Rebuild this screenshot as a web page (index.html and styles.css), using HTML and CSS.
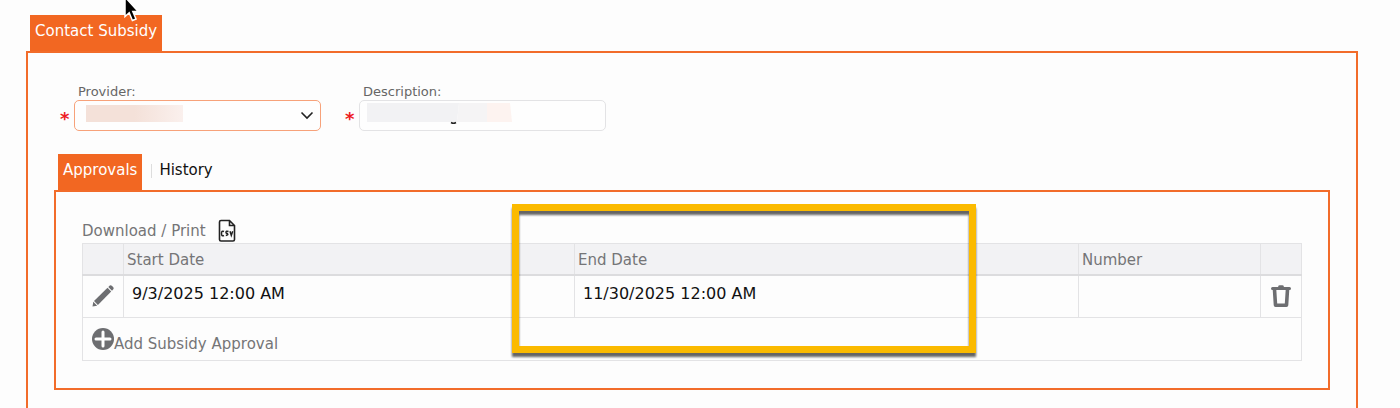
FILE: index.html
```html
<!DOCTYPE html>
<html lang="en">
<head>
  <meta charset="UTF-8">
  <title>Contact Subsidy</title>
  <meta name="viewport" content="width=device-width, initial-scale=1.0">
  <link rel="stylesheet" href="styles.css">
</head>
<body>

<main class="page">
  <nav class="tabs">
    <a class="tab active" href="#subsidy">Contact Subsidy</a>
  </nav>

  <section class="panel outer" id="subsidy">
    <form class="fields">
      <div class="field">
        <label for="provider">Provider:</label>
        <div class="control">
          <span class="required">*</span>
          <div class="box">
            <select id="provider" required>
              <option value=""></option>
            </select>
            <span class="mask mask-provider"></span>
            <svg class="chevron" viewBox="0 0 14 9" width="14" height="9"><path d="M1.500 1.500 7 7l5.500-5.500" fill="none" stroke="#222" stroke-width="1.600"/></svg>
          </div>
        </div>
      </div>
      <div class="field">
        <label for="description">Description:</label>
        <div class="control">
          <span class="required">*</span>
          <div class="box">
            <input type="text" id="description" required>
            <svg class="mask mask-description" viewBox="0 0 146 24" width="146" height="24">
              <path d="M0 0H92L90 19H0Z" fill="#f2f2f4"/>
              <path d="M92 0h28v19H90Z" fill="#f5f4f5"/>
              <path d="M120 0h23l2 19h-25Z" fill="#fdf3f0"/>
              <path d="M84 19.500q2.500 1.500 5 0" fill="none" stroke="#222" stroke-width="1.500"/>
            </svg>
          </div>
        </div>
      </div>
    </form>

    <nav class="tabs">
      <a class="tab active" href="#approvals">Approvals</a>
      <a class="tab divided" href="#history">History</a>
    </nav>

    <section class="panel inner" id="approvals">
      <a class="download" href="#csv">Download / Print
        <svg viewBox="0 0 18 24" width="18" height="24">
          <path d="M3 1.500h8.500l5 5V20.500q0 1.500-1.500 1.500H3q-1.500 0-1.500-1.500V3q0-1.500 1.500-1.500ZM11.500 1.500v5h5" fill="none" stroke="#222" stroke-width="1.600"/>
          <path d="M6 12.500q-2.500-1.200-2.500 2t2.500 2M10.500 12.500q-2.500-.8-2.500.7t1.500 1.400q1.200 1.500-1.700 1.800M12 12.200l1.300 4.200 1.400-4.200" fill="none" stroke="#222" stroke-width="1.500"/>
        </svg>
      </a>

      <table class="grid">
        <thead>
          <tr>
            <th class="col-icon"></th>
            <th class="col-start">Start Date</th>
            <th class="col-end">End Date</th>
            <th class="col-number">Number</th>
            <th class="col-icon"></th>
          </tr>
        </thead>
        <tbody>
          <tr>
            <td class="icon">
              <button type="button" aria-label="Edit">
                <svg viewBox="0 0 24 24" width="24" height="24" fill="#6d6e71">
                  <path d="M1.500 22.500 2.300 17.800 6.200 21.700Z"/>
                  <path d="M3 17 16.500 3.800 20.200 7.500 6.900 20.900Z"/>
                  <path d="M17.300 3 18.800 1.600q1-.8 2 .2l1.500 1.500q.9 1 0 1.900L21 6.700Z"/>
                </svg>
              </button>
            </td>
            <td>9/3/2025 12:00 AM</td>
            <td>11/30/2025 12:00 AM</td>
            <td></td>
            <td class="icon">
              <button type="button" aria-label="Delete">
                <svg viewBox="0 0 24 24" width="24" height="24">
                  <path d="M3.500 4.500h17" fill="none" stroke="#6d6e71" stroke-width="3" stroke-linecap="round"/>
                  <path d="M9 3.500q0-2.200 1.500-2.200h3q1.500 0 1.500 2.200Z" fill="#6d6e71"/>
                  <path d="M5.500 5.500 6.500 21.200h11L18.500 5.500" fill="none" stroke="#6d6e71" stroke-width="3.600" stroke-linejoin="round"/>
                </svg>
              </button>
            </td>
          </tr>
        </tbody>
        <tfoot>
          <tr>
            <td colspan="5">
              <button type="button" class="add">
                <svg viewBox="0 0 22 22" width="22" height="22">
                  <circle cx="11" cy="11" r="11" fill="#6d6e71"/>
                  <path d="M11 4v14M4 11h14" stroke="#fff" stroke-width="3" stroke-linecap="round"/>
                </svg>
                <span>Add Subsidy Approval</span>
              </button>
            </td>
          </tr>
        </tfoot>
      </table>

      <div class="highlight"></div>
    </section>
  </section>
</main>

<svg class="cursor" viewBox="0 0 18 26" width="18" height="26">
  <path d="M2-3V16.500L6.200 12.800 9.400 20.500 13 19 9.800 11.600H15.200Z" fill="#000" stroke="#fff" stroke-width="1.500"/>
</svg>

</body>
</html>
```
FILE: styles.css
```css
* {
  box-sizing: border-box;
}
body {
  font-family: Verdana, "DejaVu Sans", sans-serif;
  font-size: 15px;
  line-height: 20px;
  margin: 0;
  background: #fdfdfd;
  color: #111;
}
.page {
  display: flex;
  flex-direction: column;
  min-height: 100vh;
  padding: 15px 42px 0 26px;
}
.tabs {
  display: flex;
  padding-left: 4px;
}
.tab {
  height: 36px;
  padding: 6px 5px 0;
  color: #111;
  text-decoration: none;
}
.tab.active {
  background: #f26722;
  color: white;
}
.tab.divided::before {
  content: "";
  display: inline-block;
  height: 14px;
  margin: 0 7px 0 4px;
  border-left: 1px solid #ddd;
  vertical-align: middle;
}
.panel {
  border: 2px solid #f26c2a;
}
.outer {
  flex: 1;
  padding: 30px 26px 16px;
  border-bottom: none;
}
.fields {
  display: flex;
  gap: 24px;
  margin: 0 0 23px 6px;
}
.field label {
  display: block;
  padding-left: 18px;
  font-size: 13px;
  line-height: 17px;
  color: #666;
}
.control {
  display: flex;
}
.required {
  width: 14px;
  padding-top: 9px;
  color: #ed1c24;
  font-size: 18px;
  font-weight: bold;
}
.box {
  position: relative;
  width: 247px;
}
.box select,
.box input {
  display: block;
  width: 100%;
  height: 31px;
  padding: 4px 12px;
  border: 1px solid #e3e3e5;
  border-radius: 5px;
  background: #fefefe;
  font: inherit;
  appearance: none;
  outline: none;
}
.box select {
  border-color: #f7a27a;
}
.mask {
  position: absolute;
  pointer-events: none;
}
.mask-provider {
  top: 5px;
  left: 12px;
  width: 97px;
  height: 17px;
  background: linear-gradient(to right, #f4e1d9 50%, #faf0ed);
}
.mask-description {
  top: 3px;
  left: 8px;
}
.chevron {
  position: absolute;
  top: 11px;
  right: 7px;
  pointer-events: none;
}
.inner {
  position: relative;
  padding: 26px 26px 27px;
}
.download {
  display: flex;
  align-items: center;
  gap: 12px;
  height: 25px;
  color: #757577;
  text-decoration: none;
}
.grid {
  width: 100%;
  table-layout: fixed;
  border-collapse: collapse;
}
.grid th,
.grid td {
  border: 1px solid #e3e3e5;
}
.grid th {
  height: 31px;
  padding: 2px 3px 0;
  background: #f2f2f4;
  border-bottom: 2px solid #dcdcde;
  color: #757577;
  font-weight: normal;
  text-align: left;
}
.grid td {
  height: 43px;
  padding: 0 8px 4px;
  font-size: 16px;
}
.grid .icon {
  padding: 0;
  text-align: center;
}
.grid .col-icon {
  width: 41px;
}
.col-start {
  width: 451px;
}
.col-end {
  width: auto;
}
.col-number {
  width: 182px;
}
button {
  padding: 0;
  border: none;
  background: none;
  font: inherit;
  color: inherit;
  cursor: pointer;
}
.icon svg {
  display: block;
}
.icon button {
  display: inline-block;
  vertical-align: middle;
}
.grid tfoot td {
  padding: 4px 9px 0;
}
.add {
  display: flex;
  color: #757577;
  font-size: 15px;
}
.add span {
  padding-top: 6px;
}
.highlight {
  position: absolute;
  top: 12px;
  left: 456px;
  width: 464px;
  height: 149px;
  border: 7px solid #fbba00;
  filter: drop-shadow(0 4px 1px rgba(0, 0, 0, 0.6));
  pointer-events: none;
}
.cursor {
  position: absolute;
  top: 0;
  left: 123px;
}
```
